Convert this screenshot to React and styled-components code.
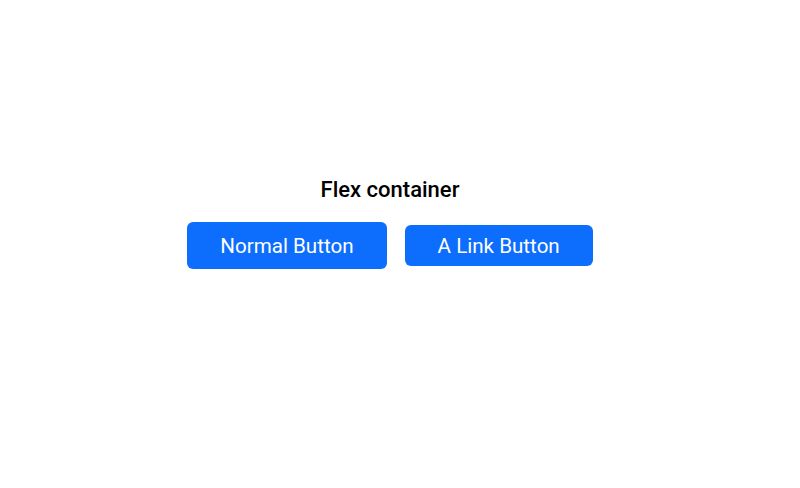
import styled, { createGlobalStyle } from "styled-components";

const GlobalStyle = createGlobalStyle`
    html, body {
        margin: 0;
        background: #ffffff;
        font-family: Roboto, "Liberation Sans", sans-serif;
    }
`;

const Page = styled.div`
    width: 800px;
    height: 488px;
    box-sizing: border-box;
    padding: 176px 20px 0 0;
    display: flex;
    flex-direction: column;
    align-items: center;
`;

const Titulo = styled.h2`
    margin: 0 0 18px;
    font-size: 22px;
    font-weight: 500;
    line-height: 28px;
    color: #000000;
`;

const Linha = styled.div`
    display: flex;
    align-items: center;
    gap: 18px;
`;

const Botao = styled.button`
    font-family: Roboto, "Liberation Sans", sans-serif;
    font-size: 20.6px;
    line-height: 24px;
    color: #ffffff;
    background: #0d6efd;
    border: none;
    border-radius: 6px;
    padding: ${(props) => (props.$alto ? "11.5px 33px" : "8.5px 33px")};
    cursor: pointer;
`;

const BotaoLink = styled(Botao).attrs({ as: "a", href: "#" })`
    text-decoration: none;
    display: inline-block;
`;

const App = () => {
    return (
        <>
            <GlobalStyle />
            <Page>
                <Titulo>Flex container</Titulo>
                <Linha>
                    <Botao $alto>Normal Button</Botao>
                    <BotaoLink>A Link Button</BotaoLink>
                </Linha>
            </Page>
        </>
    );
};

export default App;
